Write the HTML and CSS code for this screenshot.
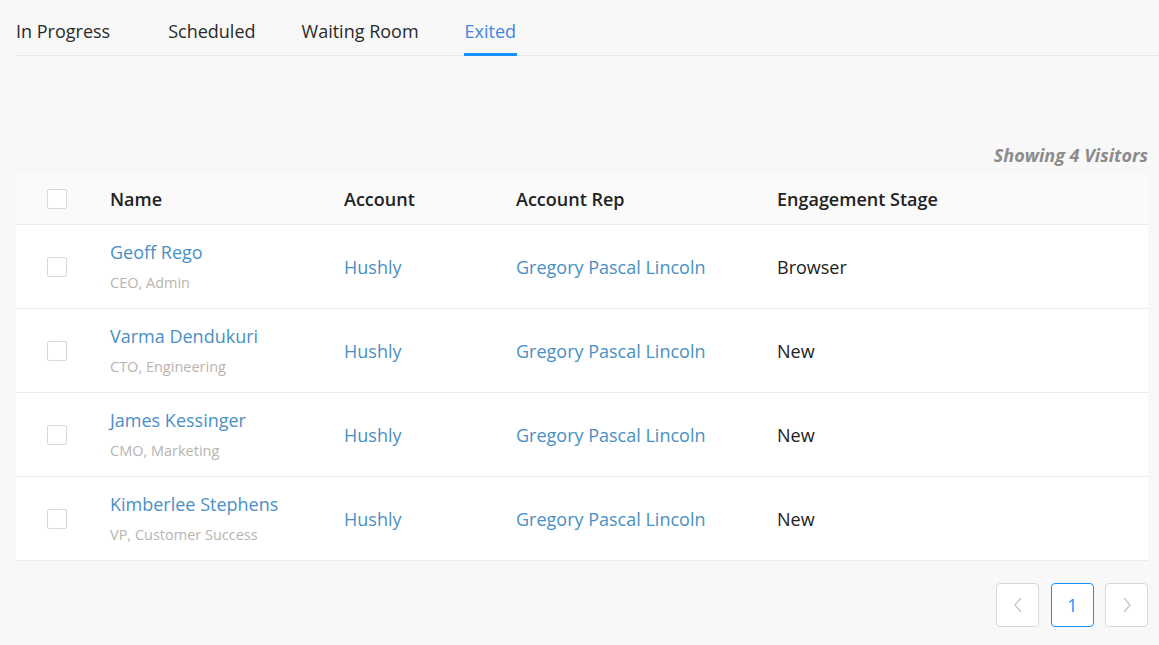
FILE: index.html
```html
<!DOCTYPE html>
<html lang="en">
<head>
    <meta charset="UTF-8">
    <meta name="viewport" content="width=device-width, initial-scale=1.0">
    <title>Visitors - Exited</title>
    <link rel="stylesheet" href="styles.css">
</head>
<body>
    <nav class="tabs">
        <a class="tab" href="#">In Progress</a>
        <a class="tab" href="#">Scheduled</a>
        <a class="tab" href="#">Waiting Room</a>
        <a class="tab active" href="#">Exited</a>
    </nav>

    <div class="content">
        <div class="count">Showing 4 Visitors</div>

        <table class="visitors">
            <thead>
                <tr>
                    <th class="col-check"><span class="checkbox"></span></th>
                    <th class="col-name">Name</th>
                    <th class="col-account">Account</th>
                    <th class="col-rep">Account Rep</th>
                    <th>Engagement Stage</th>
                </tr>
            </thead>
            <tbody>
                <tr>
                    <td class="col-check"><span class="checkbox"></span></td>
                    <td><a class="name" href="#">Geoff Rego</a><div class="role">CEO, Admin</div></td>
                    <td><a href="#">Hushly</a></td>
                    <td><a href="#">Gregory Pascal Lincoln</a></td>
                    <td>Browser</td>
                </tr>
                <tr>
                    <td class="col-check"><span class="checkbox"></span></td>
                    <td><a class="name" href="#">Varma Dendukuri</a><div class="role">CTO, Engineering</div></td>
                    <td><a href="#">Hushly</a></td>
                    <td><a href="#">Gregory Pascal Lincoln</a></td>
                    <td>New</td>
                </tr>
                <tr>
                    <td class="col-check"><span class="checkbox"></span></td>
                    <td><a class="name" href="#">James Kessinger</a><div class="role">CMO, Marketing</div></td>
                    <td><a href="#">Hushly</a></td>
                    <td><a href="#">Gregory Pascal Lincoln</a></td>
                    <td>New</td>
                </tr>
                <tr>
                    <td class="col-check"><span class="checkbox"></span></td>
                    <td><a class="name" href="#">Kimberlee Stephens</a><div class="role">VP, Customer Success</div></td>
                    <td><a href="#">Hushly</a></td>
                    <td><a href="#">Gregory Pascal Lincoln</a></td>
                    <td>New</td>
                </tr>
            </tbody>
        </table>

        <div class="pager">
            <button class="page-btn arrow prev" aria-label="Previous">
                <svg width="12" height="16" viewBox="0 0 12 16"><path d="M9 1 L3 8 L9 15" fill="none" stroke="#c8c8c8" stroke-width="1.4"/></svg>
            </button>
            <button class="page-btn current">1</button>
            <button class="page-btn arrow" aria-label="Next">
                <svg width="12" height="16" viewBox="0 0 12 16"><path d="M3 1 L9 8 L3 15" fill="none" stroke="#c8c8c8" stroke-width="1.4"/></svg>
            </button>
        </div>
    </div>
</body>
</html>
```

FILE: styles.css
```css
body {
    margin: 0;
    padding: 0 0 0 16px;
    font-family: 'Open Sans', 'Noto Sans', sans-serif;
    font-size: 18px;
    color: #222;
    background-color: #f8f8f8;
}
a {
    color: #4a8fc4;
    text-decoration: none;
}
.tabs {
    display: flex;
    height: 56px;
    box-sizing: border-box;
    border-bottom: 1px solid #e8e8e8;
}
.tab {
    color: #2a2a2a;
    font-size: 18px;
    line-height: 24px;
    height: 34px;
    padding-top: 19px;
    margin-bottom: -1px;
    border-bottom: 3px solid transparent;
}
.tab:nth-child(1) { margin-right: 58px; }
.tab:nth-child(2) { margin-right: 46px; }
.tab:nth-child(3) { margin-right: 45px; }
.tab.active {
    color: #3f86e0;
    padding: 19px 1px 0;
    border-bottom-color: #1890ff;
}
.content {
    margin-right: 11px;
}
.count {
    text-align: right;
    margin-top: 87px;
    font-size: 18px;
    font-weight: 700;
    font-style: italic;
    color: #8c8c8c;
    line-height: 24px;
}
.visitors {
    width: 100%;
    border-collapse: collapse;
    margin-top: 6px;
}
.visitors th {
    text-align: left;
    font-weight: 600;
    height: 51px;
    background-color: #fafafa;
    border-bottom: 1px solid #ececec;
    padding: 0;
}
.visitors td {
    background-color: #fff;
    height: 83px;
    border-bottom: 1px solid #ececec;
    padding: 0;
}
.col-check {
    width: 94px;
    padding-left: 31px !important;
    box-sizing: border-box;
}
.col-name { width: 234px; }
.col-account { width: 172px; }
.col-rep { width: 261px; }
.checkbox {
    display: block;
    width: 20px;
    height: 20px;
    box-sizing: border-box;
    border: 1px solid #d9d9d9;
    border-radius: 2px;
    background-color: #fff;
}
.name {
    display: block;
    line-height: 24px;
}
.role {
    margin-top: 9px;
    font-size: 14.5px;
    line-height: 20px;
    color: #b9b4ae;
}
.pager {
    display: flex;
    justify-content: flex-end;
    gap: 11px;
    margin-top: 22px;
}
.page-btn {
    width: 43px;
    height: 44px;
    background-color: #fff;
    border: 1px solid #d9d9d9;
    border-radius: 4px;
    font-family: inherit;
    font-size: 18px;
    color: #1890ff;
    display: flex;
    align-items: center;
    justify-content: center;
    padding: 0;
}
.page-btn.prev {
    margin-right: 1px;
}
.page-btn.current {
    border-color: #1890ff;
}
```
